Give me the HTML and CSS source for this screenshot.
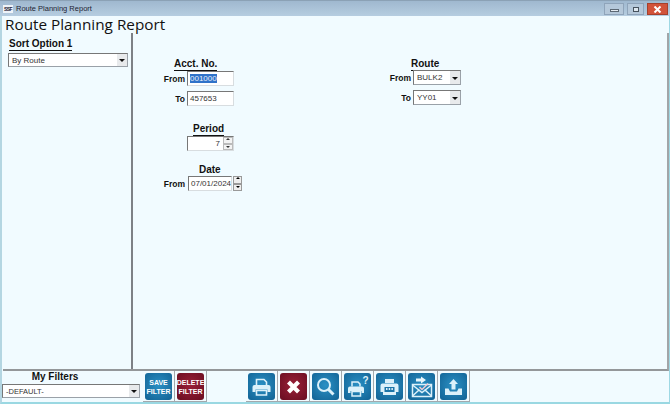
FILE: index.html
```html
<!DOCTYPE html>
<html lang="en">
<head>
<meta charset="utf-8">
<title>Route Planning Report</title>
<link rel="stylesheet" href="styles.css">
</head>
<body>
<div class="window">
  <header class="titlebar">
    <div class="app-icon">SSF</div>
    <div class="title-text">Route Planning Report</div>
    <div class="controls">
      <div class="ctl ctl-min"><span class="min-glyph"></span></div>
      <div class="ctl ctl-max"><span class="max-glyph"></span></div>
      <div class="ctl ctl-close"><svg width="9" height="7" viewBox="0 0 9 7"><path d="M1.500 0.500L7.500 6.500M7.500 0.500L1.500 6.500" stroke="#fff" stroke-width="2"/></svg></div>
    </div>
  </header>
  <div class="client">
    <h1 class="report-title">Route Planning Report</h1>
    <div class="main">
      <aside class="sidebar">
        <div class="sort-title">Sort Option 1</div>
        <div class="combo combo-sort"><span class="val">By Route</span><span class="arrow"></span></div>
      </aside>
      <section class="content">
        <div class="col-left">
          <div class="group group-acct">
            <div class="heading head-acct">Acct. No.</div>
            <div class="row"><span class="lbl">From</span><div class="field"><span class="sel">001000</span></div></div>
            <div class="row row-to"><span class="lbl">To</span><div class="field">457653</div></div>
          </div>
          <div class="group group-period">
            <div class="heading head-period">Period</div>
            <div class="row"><span class="lbl"></span><div class="field field-spin"><span class="spin-val">7</span><span class="spin light"><i class="up"></i><i class="down"></i></span></div></div>
          </div>
          <div class="group group-date">
            <div class="heading head-date">Date</div>
            <div class="row"><span class="lbl">From</span><div class="field field-date"><span>07/01/2024</span></div><span class="spin dark"><i class="up"></i><i class="down"></i></span></div>
          </div>
        </div>
        <div class="col-right">
          <div class="heading head-route">Route</div>
          <div class="row"><span class="lbl lbl-r">From</span><div class="combo combo-route"><span class="val">BULK2</span><span class="arrow"></span></div></div>
          <div class="row row-to2"><span class="lbl lbl-r">To</span><div class="combo combo-route"><span class="val">YY01</span><span class="arrow"></span></div></div>
        </div>
      </section>
    </div>
    <footer class="footer">
      <div class="filters">
        <div class="filters-title">My Filters</div>
        <div class="combo combo-filter"><span class="val">-DEFAULT-</span><span class="arrow"></span></div>
      </div>
      <div class="cell"><div class="btn blue txt">SAVE<br>FILTER</div></div>
      <div class="cell"><div class="btn red txt">DELETE<br>FILTER</div></div>
      <div class="spacer"></div>
      <div class="cell">
        <div class="btn blue"><svg width="19" height="18" viewBox="0 0 19 18"><path d="M4.500 7V1.500h7.500l2.500 2.500v3" fill="none" stroke="#dcf1fa" stroke-width="1.600"/><path d="M2.500 7h14a2 2 0 0 1 2 2v5h-3v-2.500h-12V14h-3V9a2 2 0 0 1 2-2z" fill="#dcf1fa"/><path d="M4.500 12.500h10v4.500h-10z" fill="none" stroke="#dcf1fa" stroke-width="1.600"/></svg></div>
      </div>
      <div class="cell">
        <div class="btn red"><svg width="15" height="14" viewBox="0 0 15 14"><path d="M2.500 2l10 10M12.500 2l-10 10" stroke="#fff" stroke-width="4.200"/></svg></div>
      </div>
      <div class="cell">
        <div class="btn blue"><svg width="19" height="19" viewBox="0 0 19 19"><circle cx="8" cy="8" r="6" fill="none" stroke="#dcf1fa" stroke-width="2"/><path d="M12.500 12.500l5 5" stroke="#dcf1fa" stroke-width="3"/></svg></div>
      </div>
      <div class="cell">
        <div class="btn blue"><svg width="22" height="22" viewBox="0 0 22 22"><path d="M5 10.500V6h6l2 2v2.500" fill="none" stroke="#dcf1fa" stroke-width="1.500"/><path d="M3 10.500h12a2 2 0 0 1 2 2v4.500h-2.500v-2h-11v2H1v-4.500a2 2 0 0 1 2-2z" fill="#dcf1fa"/><path d="M5 15.500h8.500v4.500H5z" fill="none" stroke="#dcf1fa" stroke-width="1.500"/><text x="15.500" y="8" class="q">?</text></svg></div>
      </div>
      <div class="cell">
        <div class="btn blue"><svg width="19" height="18" viewBox="0 0 19 18"><path d="M5 1h9v4H5z" fill="#dcf1fa"/><path d="M2.500 5.500h14a2 2 0 0 1 2 2V14h-2.500v3H3v-3H.5V7.500a2 2 0 0 1 2-2z" fill="#dcf1fa"/><path d="M4.500 9h10v5h-10z" fill="#1c75a8"/><path d="M6 11h1.500M8.700 11h1.500M11.400 11h1.500" stroke="#dcf1fa" stroke-width="2"/></svg></div>
      </div>
      <div class="cell">
        <div class="btn blue"><svg width="22" height="22" viewBox="0 0 22 22"><path d="M1.500 8.500h19v12h-19z" fill="none" stroke="#dcf1fa" stroke-width="1.500"/><path d="M1.500 20l7-6.500M20.500 20l-7-6.500M1.500 9l9.500 7.500L20.500 9" fill="none" stroke="#dcf1fa" stroke-width="1.500"/><path d="M10 .5l5 3.500-5 3.500V5.500H5v-3h5z" fill="#e9f6fb"/><path d="M8.500 11l2.500 2.500 6-6" fill="none" stroke="#f0c8d2" stroke-width="1.500"/></svg></div>
      </div>
      <div class="cell">
        <div class="btn blue"><svg width="19" height="18" viewBox="0 0 19 18"><path d="M9.500 1l4.500 5h-2.500v5.500h-4V6H5z" fill="#dcf1fa"/><path d="M1 10.500h3.500l1.500 3h7l1.500-3H18V17H1z" fill="#dcf1fa"/></svg></div>
      </div>
    </footer>
  </div>
</div>
</body>
</html>
```
FILE: styles.css
```css
* { box-sizing: border-box; }
html, body { margin: 0; padding: 0; }
body { width: 670px; height: 404px; overflow: hidden; background: #f1fbff; font-family: "Liberation Sans", Arial, sans-serif; color: #111; }
.window { height: 404px; display: flex; flex-direction: column; border-left: 2px solid #b4d6e2; border-right: 1px solid #9ed8e4; border-bottom: 2px solid #9ad8e2; }
.titlebar { height: 16px; margin: 0 -1px 0 -2px; flex: none; display: flex; align-items: center; background: linear-gradient(#9fb8cf, #b6cde0); border-top: 1px solid #8ba1b5; padding-left: 3px; }
.app-icon { width: 10px; height: 8px; background: #eef3f8; color: #223; font: bold 5px/8px "Liberation Sans", sans-serif; text-align: center; letter-spacing: -0.5px; overflow: hidden; }
.title-text { margin-left: 3px; font-size: 7.500px; color: #223; }
.controls { margin-left: auto; display: flex; gap: 3px; align-self: flex-start; padding: 2px 2px 0 0; }
.ctl { height: 12px; display: flex; align-items: center; justify-content: center; border: 1px solid #8fa4ba; }
.ctl-min { width: 20px; background: #b5c8da; }
.ctl-max { width: 17px; background: #b5c8da; }
.ctl-close { width: 21px; background: #d2533a; border-color: #a5402c; }
.min-glyph { width: 9px; height: 3px; margin-top: 3px; background: #e4ebf2; border: 1px solid #5c6874; }
.max-glyph { width: 6px; height: 5px; background: #dde7ef; border: 1px solid #46525e; }
.client { flex: 1; min-height: 0; display: flex; flex-direction: column; background: #f1fbff; }
.report-title { margin: 0; height: 17px; padding-left: 3px; font-family: "Open Sans", sans-serif; font-size: 15.300px; line-height: 17px; font-weight: 400; color: #111; flex: none; }
.main { flex: 1; min-height: 0; display: flex; margin-left: 1px; border-bottom: 2px solid #94979a; border-right: 2px solid #a2a5a8; }
.sidebar { width: 130px; flex: none; border-right: 2px solid #7d8186; padding: 5px 3px 0 0; }
.sort-title { margin-left: 6px; font-size: 10px; font-weight: 700; line-height: 12px; width: 63px; border-bottom: 1px solid #111; white-space: nowrap; }
.combo { display: flex; align-items: center; background: #fff; border: 1px solid #9aa1a8; border-top-color: #777; border-left-color: #777; position: relative; font-size: 8px; color: #333; }
.combo .val { padding-left: 3px; flex: 1; white-space: nowrap; }
.arrow { width: 10px; height: 100%; flex: none; background: #e8eaec; position: relative; }
.arrow::after { content: ""; position: absolute; left: 2px; top: 50%; margin-top: -1px; border: 3px solid transparent; border-top-color: #111; border-bottom: 0; }
.combo-sort { height: 14px; width: 120px; margin: 2px 0 0 5px; }
.content { flex: 1; display: flex; padding-top: 25px; }
.col-left { width: 110px; margin-left: 18px; }
.col-right { margin-left: 122px; }
.heading { font-size: 10px; font-weight: 700; line-height: 12px; border-bottom: 1px solid #111; width: max-content; }
.row { display: flex; align-items: center; height: 15px; }
.lbl { font-size: 8.500px; font-weight: 700; width: 34px; text-align: right; margin-right: 2px; }
.field { width: 47px; height: 15px; background: #fff; border: 1px solid #d8dde0; border-top-color: #777; border-left-color: #777; font-size: 8px; line-height: 13px; padding-left: 2px; color: #333; position: relative; }
.sel { background: #2f72c9; color: #e8f0fa; }
.head-acct { margin: 0 0 0 23px; }
.row-to { margin-top: 5px; }
.group-period { margin-top: 17px; }
.head-period { margin: 0 0 0 42px; }
.field-spin { display: flex; justify-content: flex-end; padding: 0; }
.spin-val { padding-right: 3px; }
.spin { display: flex; flex-direction: column; width: 10px; height: 13px; }
.spin i { flex: 1; position: relative; display: block; background: #f3f3f3; border: 1px solid #bbb; }
.spin i::after { content: ""; position: absolute; left: 2px; border: 2px solid transparent; }
.spin .up::after { top: 0; border-top: 0; border-bottom-color: #333; }
.spin .down::after { top: 1px; border-bottom: 0; border-top-color: #333; }
.spin.dark { height: 15px; width: 9px; margin-left: 1px; }
.spin.dark i { background: #eee; border-color: #999; }
.spin.dark i::after { border-bottom-color: #000; }
.spin.dark .down::after { border-top-color: #000; border-bottom-color: transparent; }
.group-date { margin-top: 13px; }
.head-date { margin: 0 0 -1px 48px; }
.field-date { width: 44px; padding-left: 2px; margin-left: 1px; }
.col-right .heading { margin: 0 0 -1px 28px; }
.lbl-r { width: 28px; }
.combo-route { width: 48px; height: 15px; }
.row-to2 { margin-top: 5px; }
.footer { height: 31px; flex: none; display: flex; }
.filters { width: 141px; flex: none; }
.filters-title { font-size: 10px; font-weight: 700; line-height: 12px; text-align: center; padding-right: 35px; }
.combo-filter { height: 14px; width: 138px; margin: 1px 0 0 0; font-size: 7.500px; }
.cell { width: 32px; flex: none; height: 31px; border-right: 1px solid #a4a9ad; border-bottom: 1px solid #a4a9ad; padding-left: 2px; }
.spacer { width: 39px; flex: none; }
.btn { width: 27px; height: 27px; margin-top: 2px; border-radius: 3px; display: flex; align-items: center; justify-content: center; color: #fff; }
.blue { background: radial-gradient(circle at 50% 45%, #2b90c4, #126496 95%); }
.red { background: radial-gradient(circle at 50% 45%, #9a2038, #6b0e22 95%); }
.txt { font-size: 7px; font-weight: 700; line-height: 9px; text-align: center; }
.q { font: bold 10px "Liberation Sans", sans-serif; fill: #dcf1fa; }
```
